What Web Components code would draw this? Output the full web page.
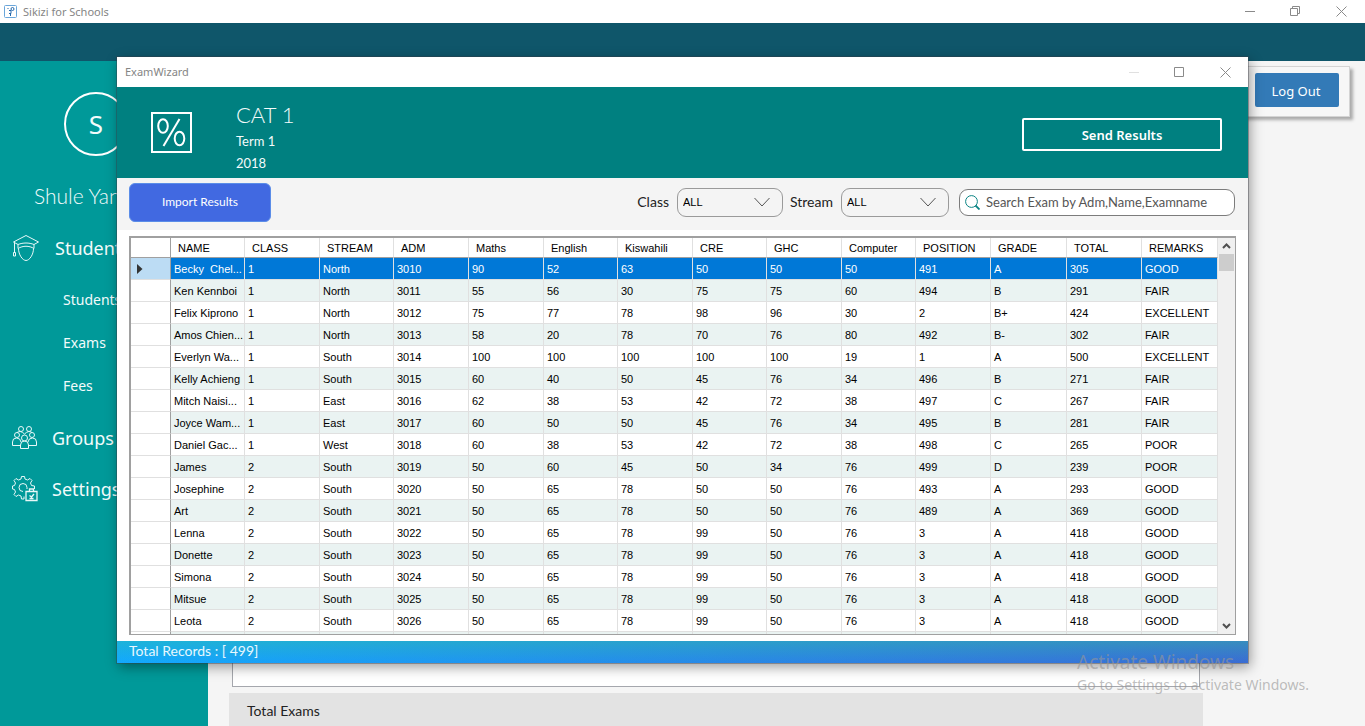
<!DOCTYPE html>
<html lang="en">
<head>
<meta charset="utf-8">
<title>Sikizi for Schools</title>
<style>
  html, body { height: 100%; margin: 0; }
  body { overflow: hidden; font-family: "Noto Sans", "Open Sans", sans-serif; background: #f5f5f5;
         --geo: "Lato", "Noto Sans", sans-serif; --ui: "Noto Sans", "Open Sans", sans-serif; --grid: "Liberation Sans", Arial, sans-serif; }
</style>
</head>
<body>
<school-app></school-app>
<script>
const define = (name, html, setup) => {
  const tpl = document.createElement('template');
  tpl.innerHTML = html;
  customElements.define(name, class extends HTMLElement {
    constructor() {
      super();
      this.attachShadow({ mode: 'open' }).append(tpl.content.cloneNode(true));
    }
    connectedCallback() { if (setup) setup.call(this, this.shadowRoot); }
  });
};

/* Minimise / maximise / close buttons of a window */
define('window-controls', `
<style>
  :host { display: flex; }
  button { width: 46px; height: 22px; padding: 0; border: 0; background: none; display: grid; place-items: center; color: #8a8a8a; }
  svg { display: block; fill: none; stroke: currentColor; }
  :host([fixed]) .min { color: #e0e0e0; }
  :host([maximized]) .single, :host(:not([maximized])) .double { display: none; }
</style>
<button class="min" aria-label="Minimise"><svg width="11" height="11"><path d="M1 5.500h10"/></svg></button>
<button aria-label="Maximise">
  <svg class="single" width="11" height="11"><path d="M.5.5h9v9h-9z"/></svg>
  <svg class="double" width="11" height="11"><path d="M.5 2.500h7v7h-7zM2.500 2.500v-2h7v7h-2"/></svg>
</button>
<button aria-label="Close"><svg width="11" height="11"><path d="M.5.5l10 10M10.500.5l-10 10"/></svg></button>
`);

define('title-bar', `
<style>
  :host { display: flex; align-items: center; background: #fff; color: #858585; font: 11px/16px var(--ui); }
  span { margin-right: auto; }
</style>
<slot name="icon"></slot><span><slot></slot></span><slot name="controls"></slot>
`);

define('nav-item', `
<style>
  :host { display: block; color: #f2fbfb; }
  a { display: flex; align-items: center; height: 51px; padding-left: 12px; gap: 14px; color: inherit; text-decoration: none; font: 18px/24px var(--ui); white-space: nowrap; }
  :host([sub]) a { height: 43px; padding-left: 63px; font-size: 14px; gap: 0; }
  ::slotted(svg) { display: block; flex: none; fill: none; stroke: #e8f8f8; }
</style>
<a href="#"><slot name="icon"></slot><slot></slot></a>
`);

define('side-bar', `
<style>
  :host { display: block; background: #009999; color: #f2fbfb; overflow: hidden; padding-top: 31px; }
  .avatar { box-sizing: border-box; width: 64px; height: 64px; margin-left: 64px; border: 2px solid #fff; border-radius: 50%; display: grid; place-items: center; font: 26px/32px var(--ui); }
  .school { margin: 27px 0 13px 34px; font: 300 21px/26px var(--geo); white-space: nowrap; }
  .subs { margin: 5px 0; }
</style>
<div class="avatar">S</div>
<div class="school">Shule Yangu</div>
<nav>
  <nav-item>
    <svg slot="icon" width="29" height="28" viewBox="0 0 29 28"><path d="M1.500 8L14 1.500 26.500 8l-4.500 2.500c-5-2-11-2-16 0zM2.500 8.500v10M1.500 18.500h2v3.500h-2zM6 10.500v4c5-3 11-3 16 0v-4M6.500 14.500c0 6 4 12 7.500 12s7.500-6 7.500-12"/></svg>
    Students</nav-item>
  <div class="subs">
    <nav-item sub>Students</nav-item>
    <nav-item sub>Exams</nav-item>
    <nav-item sub>Fees</nav-item>
  </div>
  <nav-item>
    <svg slot="icon" width="26" height="26" viewBox="0 0 26 26"><circle cx="9" cy="4" r="2.500"/><circle cx="17" cy="4" r="2.500"/><circle cx="5" cy="10" r="2.500"/><circle cx="20" cy="10" r="2.500"/><circle cx="12.500" cy="13" r="3"/><path d="M5 7.500Q8.500 5 12.500 9q4-4 7.500-1.500M.5 20.500V17q0-4 4-4t4.500 4M24.500 20.500V17q0-4-4-4T16 17M.5 20.500h8M16.500 20.500h8M8.500 23.500V20q0-4 4-4t4 4v3.500z"/></svg>
    Groups</nav-item>
  <nav-item>
    <svg slot="icon" width="26" height="26" viewBox="0 0 26 26"><path d="M12 20.500V23H9.500L9 20l-2.500-1L4 20.500l-2-2L3.500 16l-1-2.500-2-.5v-3l2-.5 1-2.500L2 4.500l2-2L6.500 4 9 3l.5-2.500h3L13 3l2.500 1L18 2.500l2 2L18.500 7l1 2.500 3 .5v3M11 15.500a4 4 0 1 1 4-4V13"/><path stroke-width="1.300" d="M14 15.500h11v9H14zM17.500 15v-2h4v2M17.500 19.500l2 1.500 2.500-3M17.500 22.500h4"/></svg>
    Settings</nav-item>
</nav>
`);

/* Page behind the dialog */
define('main-panel', `
<style>
  :host { display: flex; flex-direction: column; background: #f5f5f5; min-width: 0; }
  .actions { align-self: flex-end; display: flex; gap: 7px; margin: 5px 15px 0 0; padding: 6px 10px 9px; border: 1px solid #d4d4d4; background: #f7f7f7; box-shadow: 3px 3px 3px #aaa; }
  .actions button { width: 84px; height: 34px; border: 0; border-radius: 2px; background: #337ab7; color: #fff; font: 13px/18px var(--ui); padding: 2px 2px 0 0; }
  .list { flex: 1; margin: 20px 165px 6px 24px; border: 1px solid #a5a7ad; background: #fff; }
  .totals { margin: 0 162px 0 21px; height: 33px; box-sizing: border-box; padding: 8px 18px 0; background: #e3e3e3; color: #222; font: 14px/20px var(--geo); }
</style>
<div class="actions"><button aria-label="Account"></button><button>Log Out</button></div>
<div class="list"></div>
<div class="totals">Total Exams</div>
`);

define('filter-select', `
<style>
  :host { display: flex; align-items: center; gap: 8px; font: 14px/18px var(--geo); color: #222; }
  .box { display: grid; width: var(--w, 106px); height: 29px; }
  select, svg { grid-area: 1 / 1; }
  select { appearance: none; width: 100%; height: 100%; border: 1px solid #9a9a9a; border-radius: 9px; background: #f4f4f4; padding: 0 5px; color: #000; font: 11px/14px var(--grid); }
  svg { justify-self: end; align-self: center; margin-right: 13px; fill: none; stroke: #555; pointer-events: none; }
</style>
<label for="s"></label>
<span class="box"><select id="s"><option>ALL</option></select>
<svg width="16" height="10"><path d="M.5 1l7.500 8 7.500-8"/></svg></span>
`, function (root) { root.querySelector('label').textContent = this.getAttribute('label'); });

define('search-box', `
<style>
  :host { display: flex; align-items: center; box-sizing: border-box; width: 276px; height: 27px; border: 1px solid #7c7c7c; border-radius: 9px; background: #fff; padding: 0 5px; gap: 6px; }
  svg { flex: none; fill: none; stroke: #0b8484; }
  input { flex: 1; min-width: 0; border: 0; outline: 0; padding: 0; background: none; font: 13px/18px var(--geo); color: #333; }
  input::placeholder { color: #555; opacity: 1; }
</style>
<svg width="15" height="15"><circle cx="6.500" cy="6.500" r="5.900"/><path stroke-width="1.800" d="M10.500 10.500l4 4"/></svg>
<input type="search" aria-label="Search exams" placeholder="Search Exam by Adm,Name,Examname">
`);

define('scroll-rail', `
<style>
  :host { display: flex; flex-direction: column; width: 17px; flex: none; background: #f0f0f0; }
  button { height: 16px; padding: 0; border: 0; background: none; display: grid; place-items: center; }
  svg { fill: none; stroke: #505050; stroke-width: 2; }
  .thumb { height: 17px; margin: 0 1px; background: #cdcdcd; }
  .track { flex: 1; }
</style>
<button aria-label="Scroll up"><svg width="9" height="6"><path d="M1 5l3.500-3.500L8 5"/></svg></button>
<div class="thumb"></div><div class="track"></div>
<button aria-label="Scroll down"><svg width="9" height="6"><path d="M1 1l3.500 3.500L8 1"/></svg></button>
`);

const COLUMNS = ['NAME','CLASS','STREAM','ADM','Maths','English','Kiswahili','CRE','GHC','Computer','POSITION','GRADE','TOTAL','REMARKS'];
const WIDTHS = [74,75,74,75,75,74,75,74,75,74,75,76,75,76];
const ROWS = [
  'Becky  Chel...|1|North|3010|90|52|63|50|50|50|491|A|305|GOOD',
  'Ken Kennboi|1|North|3011|55|56|30|75|75|60|494|B|291|FAIR',
  'Felix Kiprono|1|North|3012|75|77|78|98|96|30|2|B+|424|EXCELLENT',
  'Amos Chien...|1|North|3013|58|20|78|70|76|80|492|B-|302|FAIR',
  'Everlyn Wa...|1|South|3014|100|100|100|100|100|19|1|A|500|EXCELLENT',
  'Kelly Achieng|1|South|3015|60|40|50|45|76|34|496|B|271|FAIR',
  'Mitch Naisi...|1|East|3016|62|38|53|42|72|38|497|C|267|FAIR',
  'Joyce Wam...|1|East|3017|60|50|50|45|76|34|495|B|281|FAIR',
  'Daniel Gac...|1|West|3018|60|38|53|42|72|38|498|C|265|POOR',
  'James|2|South|3019|50|60|45|50|34|76|499|D|239|POOR',
  'Josephine|2|South|3020|50|65|78|50|50|76|493|A|293|GOOD',
  'Art|2|South|3021|50|65|78|50|50|76|489|A|369|GOOD',
  'Lenna|2|South|3022|50|65|78|99|50|76|3|A|418|GOOD',
  'Donette|2|South|3023|50|65|78|99|50|76|3|A|418|GOOD',
  'Simona|2|South|3024|50|65|78|99|50|76|3|A|418|GOOD',
  'Mitsue|2|South|3025|50|65|78|99|50|76|3|A|418|GOOD',
  'Leota|2|South|3026|50|65|78|99|50|76|3|A|418|GOOD',
  '|||||||||||||'
];

define('result-grid', `
<style>
  :host { display: flex; border: solid #a0a0a0; border-width: 2px 1px 1px 2px; background: #fff; min-height: 0; overflow: hidden; }
  .view { flex: 1; min-width: 0; overflow: hidden; }
  table { width: 100%; table-layout: fixed; border-collapse: separate; border-spacing: 0; font: 11px/14px var(--grid); color: #000; }
  th, td { box-sizing: border-box; height: 22px; padding: 0 0 0 3px; text-align: left; font-weight: 400; border: solid #e0e0e0; border-width: 0 1px 1px 0; white-space: pre; overflow: hidden; }
  thead th { height: 20px; padding-left: 7px; border-bottom-color: #a0a0a0; }
  tr > :first-child { border-right-color: #a0a0a0; padding-left: 6px; }
  tbody tr:nth-child(even) td { background: #eaf3f2; }
  tbody tr.selected td { background: #0078d7; color: #fff; }
  tbody tr.selected th { background: #bcdcf4; }
  svg { display: block; fill: #333; }
</style>
<div class="view"><table><colgroup></colgroup><thead><tr></tr></thead><tbody></tbody></table></div>
<scroll-rail></scroll-rail>
`, function (root) {
  root.querySelector('colgroup').innerHTML = [40, ...WIDTHS].map(w => `<col style="width:${w}px">`).join('');
  root.querySelector('thead tr').innerHTML = '<th></th>' + COLUMNS.map(c => `<th scope="col">${c}</th>`).join('');
  root.querySelector('tbody').innerHTML = ROWS.map((r, i) =>
    `<tr${i ? '' : ' class="selected"'}><th scope="row">${i ? '' : '<svg width="6" height="10"><path d="M0 0l5.500 5L0 10z"/></svg>'}</th>` +
    r.split('|').map(c => `<td>${c}</td>`).join('') + '</tr>').join('');
});

define('exam-wizard', `
<style>
  :host { display: flex; flex-direction: column; background: #fff; box-shadow: 0 0 0 1px rgba(60,60,70,.4), 2px 4px 12px rgba(0,0,0,.4); }
  title-bar { height: 30px; padding-left: 8px; }
  header { display: flex; align-items: center; height: 91px; box-sizing: border-box; padding: 0 26px 0 34px; background: #008080; color: #f4fbfb; font: 13px/22px var(--geo); }
  header svg { flex: none; margin-right: 44px; fill: none; stroke: #fff; }
  h1 { margin: 0; font: 300 22px/30px var(--geo); }
  .exam { margin-right: auto; padding-top: 8px; }
  .send { box-sizing: border-box; width: 200px; height: 33px; border: 2px solid #fff; border-radius: 2px; background: none; color: #fff; font: 600 13px/18px var(--ui); padding: 1px 0 0; margin-top: 3px; }
  .tools { display: flex; align-items: center; height: 52px; box-sizing: border-box; padding: 0 13px 4px 12px; background: #f4f4f4; }
  .import { width: 142px; height: 39px; box-sizing: border-box; margin-right: auto; border: 1px solid #5b8de8; border-radius: 6px; background: #4169e1; color: #fff; font: 12px/16px var(--geo); padding: 0; }
  filter-select { margin-right: 7px; }
  .stream { --w: 108px; margin-right: 10px; }
  result-grid { flex: 1; margin: 6px 12px; }
  footer { height: 22px; padding-left: 12px; color: #e8f8ff; font: 14px/20px var(--geo);
    background: linear-gradient(rgba(50,200,150,.36), rgba(50,200,150,0)), linear-gradient(to right, #12a8ff, #3a6cd4); }
</style>
<title-bar>ExamWizard<window-controls slot="controls" fixed></window-controls></title-bar>
<header>
  <svg width="41" height="41"><path stroke-width="2" d="M1 1h39v39H1z"/><g stroke-width="2"><ellipse cx="12" cy="14" rx="4.800" ry="6.800"/><ellipse cx="28.500" cy="26.500" rx="4.800" ry="6.800"/><path d="M28.500 7L12.500 34"/></g></svg>
  <div class="exam"><h1>CAT 1</h1><div>Term 1</div><div>2018</div></div>
  <button class="send">Send Results</button>
</header>
<div class="tools">
  <button class="import">Import Results</button>
  <filter-select label="Class"></filter-select>
  <filter-select class="stream" label="Stream"></filter-select>
  <search-box></search-box>
</div>
<result-grid></result-grid>
<footer>Total Records : [ 499]</footer>
`);

define('school-app', `
<style>
  :host { display: grid; grid-template: 23px 38px 1fr / 208px 1fr; height: 100vh; position: relative; }
  .title { grid-column: 1 / -1; padding: 0 1px 0 4px; }
  .title svg { margin-right: 6px; }
  .band { grid-column: 1 / -1; background: #0f566a; }
  exam-wizard { position: absolute; inset: 57px 117px 63px; }
  .watermark { position: absolute; right: 56px; bottom: 31px; color: rgba(150,150,150,.62); font: 14px/20px var(--ui); pointer-events: none; }
  .watermark div { font-size: 19px; line-height: 26px; }
</style>
<title-bar class="title">
  <svg slot="icon" width="13" height="13" fill="none" stroke="#6aa6da"><rect x=".5" y=".5" width="12" height="12" rx="1"/><g stroke="#2469ad"><circle cx="8.500" cy="4" r="1.500"/><path d="M3.500 3l1 1M5 5.500h2v3H5M6.500 8v3"/></g></svg>
  Sikizi for Schools
  <window-controls slot="controls" maximized></window-controls>
</title-bar>
<div class="band"></div>
<side-bar></side-bar>
<main-panel></main-panel>
<exam-wizard></exam-wizard>
<div class="watermark"><div>Activate Windows</div>Go to Settings to activate Windows.</div>
`);
</script>
</body>
</html>
